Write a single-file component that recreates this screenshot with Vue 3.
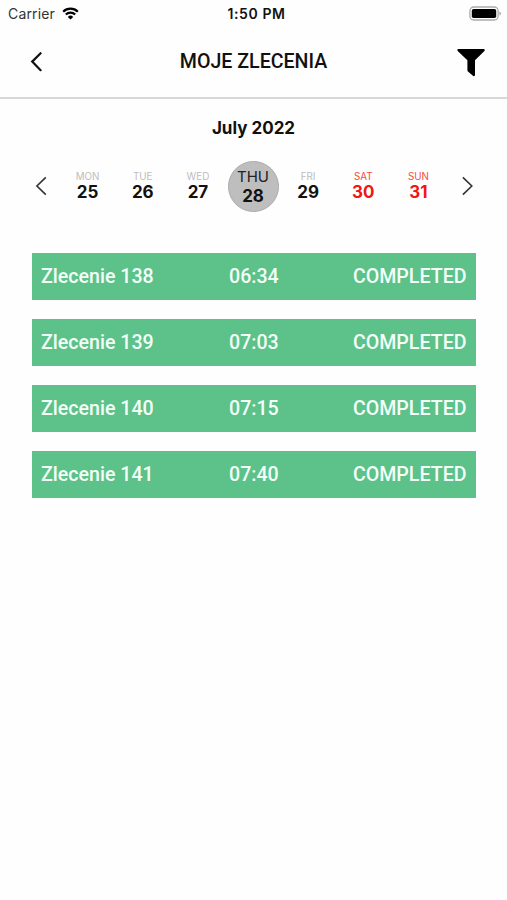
<template>
  <div class="screen">
    <div class="status-bar">
      <div class="carrier">
        <span>Carrier</span>
        <svg class="wifi" viewBox="0 0 17 13" width="17" height="13">
          <path d="M1.2 4.7a10.4 10.4 0 0 1 14.6 0" />
          <path d="M3.8 7.5a6.7 6.7 0 0 1 9.4 0" />
          <path class="dot" d="M8.5 12.6 5.8 9.9a3.8 3.8 0 0 1 5.4 0z" />
        </svg>
      </div>
      <div class="clock">1:50 PM</div>
      <div class="battery">
        <svg viewBox="0 0 32 16" width="32" height="16">
          <rect x="0.9" y="1" width="28.2" height="13" rx="3.8" fill="#fff" stroke="#aaa" stroke-width="1.3" />
          <rect x="2.8" y="2.9" width="24.4" height="9.2" rx="1.8" fill="#000" />
          <path d="M30.5 5.4a2.3 2.3 0 0 1 0 4.2z" fill="#999" />
        </svg>
      </div>
    </div>

    <header class="nav">
      <button class="icon-button back">
        <svg viewBox="0 0 12 20" width="12" height="20">
          <path d="M10.6 1.2 2.2 9.6l8.4 8.6" fill="none" stroke="#111" stroke-width="2.2" stroke-linecap="round" />
        </svg>
      </button>
      <h1>MOJE ZLECENIA</h1>
      <button class="icon-button filter">
        <svg viewBox="0 0 28 29" width="28" height="29">
          <path d="M1.5 1h25c1.1 0 1.6 1.2.9 2L18 12.3v14.8c0 1-1 1.5-1.8.9l-5.2-4.600a1.600 1.600 0 0 1-.6-1.200v-9.900L.7 3C0 2.200.4 1 1.500 1z" />
        </svg>
      </button>
    </header>

    <section class="calendar">
      <h2>July 2022</h2>
      <div class="week">
        <button class="icon-button arrow">
          <svg viewBox="0 0 12 20" width="12" height="20">
            <path d="M10.8 1.4 1.900 10l8.900 8.600" />
          </svg>
        </button>
        <div class="days">
          <div
            v-for="day in days"
            :key="day.date"
            class="day"
            :class="{ weekend: day.weekend, selected: day.date === selected }"
          >
            <span class="name">{{ day.name }}</span>
            <span class="number">{{ day.date }}</span>
          </div>
        </div>
        <button class="icon-button arrow">
          <svg viewBox="0 0 12 20" width="12" height="20">
            <path d="M1.900 1.400 10.800 10l-8.900 8.600" />
          </svg>
        </button>
      </div>
    </section>

    <ul class="orders">
      <li v-for="order in orders" :key="order.id" class="order">
        <span>Zlecenie {{ order.id }}</span>
        <span class="time">{{ order.time }}</span>
        <span class="status">{{ order.status }}</span>
      </li>
    </ul>
  </div>
</template>

<script setup>
import { ref } from 'vue'

const selected = ref(28)

const days = [
  { name: 'MON', date: 25 },
  { name: 'TUE', date: 26 },
  { name: 'WED', date: 27 },
  { name: 'THU', date: 28 },
  { name: 'FRI', date: 29 },
  { name: 'SAT', date: 30, weekend: true },
  { name: 'SUN', date: 31, weekend: true }
]

const orders = [
  { id: 138, time: '06:34', status: 'COMPLETED' },
  { id: 139, time: '07:03', status: 'COMPLETED' },
  { id: 140, time: '07:15', status: 'COMPLETED' },
  { id: 141, time: '07:40', status: 'COMPLETED' }
]
</script>

<style>
body {
  margin: 0;
  background: #fefefe;
}
</style>

<style scoped>
.screen {
  min-height: 900px;
  color: #111;
  font-family: Inter, sans-serif;
}

.status-bar {
  display: grid;
  grid-template-columns: 1fr auto 1fr;
  align-items: center;
  height: 27px;
  padding: 0 6px 0 8px;
  font-size: 14px;
}

.carrier {
  display: flex;
  align-items: center;
  gap: 7px;
  color: #333;
  letter-spacing: 0.15px;
}

.wifi {
  fill: none;
  stroke: #000;
  stroke-width: 2.2;
}

.wifi .dot {
  fill: #000;
  stroke: none;
}

.clock {
  padding-left: 4px;
  font-weight: 600;
  letter-spacing: 0.6px;
}

.battery {
  display: flex;
  justify-content: flex-end;
}

.icon-button {
  display: flex;
  align-items: center;
  justify-content: center;
  padding: 0;
  border: 0;
  background: none;
}

.nav {
  display: grid;
  grid-template-columns: 1fr auto 1fr;
  align-items: center;
  box-sizing: border-box;
  height: 72px;
  padding: 0 22px;
  border-bottom: 2px solid #d8d8d8;
}

.nav h1 {
  margin: 0;
  font: 500 19.6px/24px Roboto, sans-serif;
}

.back {
  justify-self: start;
  margin-left: 8px;
}

.filter {
  justify-self: end;
}

.calendar h2 {
  margin: 18px 0 0;
  font-size: 17px;
  font-weight: 700;
  line-height: 22px;
  text-align: center;
}

.week {
  display: flex;
  align-items: center;
  height: 52px;
  margin-top: 21px;
  padding: 0 20px 0 21px;
}

.arrow {
  width: 40px;
  height: 40px;
}

.arrow path {
  fill: none;
  stroke: #333;
  stroke-width: 1.6;
}

.days {
  display: flex;
  flex: 1;
  align-items: center;
  margin: 0 1px 0 -1px;
}

.day {
  display: flex;
  flex: 1;
  flex-direction: column;
  align-items: center;
}

.name {
  padding-top: 1px;
  color: #bdbdbd;
  font-size: 9.8px;
  line-height: 11px;
}

.number {
  font-size: 17px;
  font-weight: 700;
  line-height: 21px;
}

.weekend .number {
  color: #f01810;
}

.weekend .name {
  color: #f44a42;
}

.selected {
  box-sizing: border-box;
  flex: none;
  justify-content: center;
  width: 51px;
  height: 51px;
  margin: 0 2px;
  border: 1px solid #acacac;
  border-radius: 50%;
  background: #bebebe;
}

.selected .name {
  padding-top: 2px;
  color: #222;
  font-size: 15px;
  line-height: 18px;
}

.orders {
  display: flex;
  flex-direction: column;
  gap: 19px;
  margin: 41px 31px 0 32px;
  padding: 0;
  list-style: none;
}

.order {
  display: grid;
  grid-template-columns: 188px 1fr auto;
  align-items: center;
  height: 47px;
  padding: 0 9.5px 0 9px;
  background: #5cc28a;
  color: #f3fff7;
  font: 500 19.6px/23px Roboto, sans-serif;
}
</style>
